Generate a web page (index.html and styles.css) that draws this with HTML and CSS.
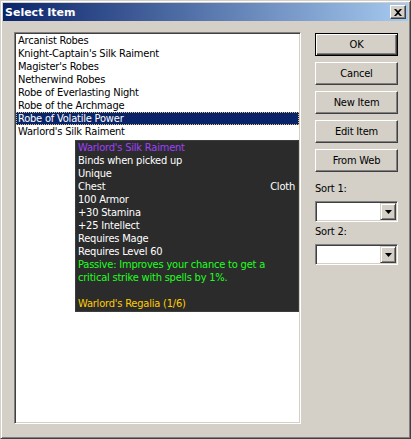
FILE: index.html
```html
<!DOCTYPE html>
<html lang="en">
<head>
    <meta charset="UTF-8">
    <title>Select Item</title>
    <link rel="stylesheet" href="styles.css">
</head>
<body>
    <div class="window">
        <div class="titlebar">
            <span class="title">Select Item</span>
            <button class="close-btn">
                <svg width="8" height="7" viewBox="0 0 8 7"><path d="M0 0h2l2 2 2-2h2L5 3.5 8 7H6L4 5 2 7H0l3-3.5z" fill="#000"/></svg>
            </button>
        </div>
        <div class="client">
            <div class="listbox">
                <ul class="items">
                    <li>Arcanist Robes</li>
                    <li>Knight-Captain's Silk Raiment</li>
                    <li>Magister's Robes</li>
                    <li>Netherwind Robes</li>
                    <li>Robe of Everlasting Night</li>
                    <li>Robe of the Archmage</li>
                    <li class="selected">Robe of Volatile Power</li>
                    <li>Warlord's Silk Raiment</li>
                </ul>
                <div class="tooltip">
                    <div class="tip-line epic">Warlord's Silk Raiment</div>
                    <div class="tip-line">Binds when picked up</div>
                    <div class="tip-line">Unique</div>
                    <div class="tip-line split"><span>Chest</span><span>Cloth</span></div>
                    <div class="tip-line">100 Armor</div>
                    <div class="tip-line">+30 Stamina</div>
                    <div class="tip-line">+25 Intellect</div>
                    <div class="tip-line">Requires Mage</div>
                    <div class="tip-line">Requires Level 60</div>
                    <div class="tip-line green">Passive: Improves your chance to get a</div>
                    <div class="tip-line green">critical strike with spells by 1%.</div>
                    <div class="tip-line">&nbsp;</div>
                    <div class="tip-line gold">Warlord's Regalia (1/6)</div>
                </div>
            </div>
            <div class="side">
                <button class="btn default">OK</button>
                <button class="btn">Cancel</button>
                <button class="btn">New Item</button>
                <button class="btn">Edit Item</button>
                <button class="btn">From Web</button>

                <div class="field-label first">Sort 1:</div>
                <div class="combo">
                    <div class="combo-text"></div>
                    <div class="combo-btn">
                        <svg width="7" height="4" viewBox="0 0 7 4"><path d="M0 0h7L3.5 4z" fill="#000"/></svg>
                    </div>
                </div>

                <div class="field-label">Sort 2:</div>
                <div class="combo">
                    <div class="combo-text"></div>
                    <div class="combo-btn">
                        <svg width="7" height="4" viewBox="0 0 7 4"><path d="M0 0h7L3.5 4z" fill="#000"/></svg>
                    </div>
                </div>
            </div>
        </div>
    </div>
</body>
</html>
```

FILE: styles.css
```css
body {
    margin: 0;
    background-color: #d4d0c8;
    font-family: "DejaVu Sans Condensed", "Liberation Sans", Arial, sans-serif;
    font-size: 11px;
    letter-spacing: -0.2px;
}
.window {
    box-sizing: border-box;
    width: 411px;
    height: 439px;
    border: 1px solid;
    border-color: #d4d0c8 #404040 #404040 #d4d0c8;
    box-shadow: inset 1px 1px #fff, inset -1px -1px #808080;
    padding: 2px;
    background-color: #d4d0c8;
}
.titlebar {
    height: 18px;
    display: flex;
    align-items: center;
    justify-content: space-between;
    background: linear-gradient(to right, #0a246a, #a6caf0);
    padding: 0 2px 0 2px;
}
.title {
    color: #fff;
    font-family: "DejaVu Sans", sans-serif;
    font-weight: bold;
    font-size: 11px;
    letter-spacing: 0;
}
.close-btn {
    box-sizing: border-box;
    width: 16px;
    height: 14px;
    padding: 0;
    background-color: #d4d0c8;
    border: 1px solid;
    border-color: #fff #404040 #404040 #fff;
    box-shadow: inset -1px -1px #808080;
    display: flex;
    align-items: center;
    justify-content: center;
}
.client {
    display: flex;
    padding: 11px 0 0 11px;
}
.listbox {
    position: relative;
    box-sizing: border-box;
    width: 287px;
    height: 392px;
    background-color: #fff;
    border: 1px solid;
    border-color: #808080 #fff #fff #808080;
    box-shadow: inset 1px 1px #404040, inset -1px -1px #d4d0c8;
    padding: 1px;
}
.items {
    list-style: none;
    margin: 0;
    padding: 0;
}
.items li {
    height: 13px;
    line-height: 13px;
    padding-left: 2px;
    white-space: nowrap;
}
.items li.selected {
    background-color: #0a246a;
    color: #fff;
    outline: 1px dotted #e0c070;
    outline-offset: -1px;
}
.tooltip {
    position: absolute;
    left: 60px;
    top: 107px;
    box-sizing: border-box;
    width: 224px;
    height: 172px;
    padding: 0 3px 0 2px;
    background-color: #2b2b2b;
    border: 1px solid #3c3c3c;
    color: #fff;
}
.tip-line {
    height: 13px;
    line-height: 13px;
    white-space: nowrap;
}
.tip-line.split {
    display: flex;
    justify-content: space-between;
}
.epic {
    color: #a040ff;
}
.green {
    color: #20ff20;
}
.gold {
    color: #ffcc00;
}
.side {
    display: flex;
    flex-direction: column;
    width: 83px;
    margin-left: 14px;
    padding-top: 1px;
}
.btn {
    box-sizing: border-box;
    width: 83px;
    height: 23px;
    margin-bottom: 6px;
    padding: 0;
    font-family: inherit;
    font-size: 11px;
    letter-spacing: inherit;
    color: #000;
    background-color: #d4d0c8;
    border: 1px solid;
    border-color: #fff #404040 #404040 #fff;
    box-shadow: inset -1px -1px #808080;
}
.btn.default {
    border-color: #000;
    box-shadow: inset 1px 1px #fff, inset -1px -1px #404040, inset -2px -2px #808080;
}
.field-label {
    height: 13px;
    line-height: 13px;
    margin-top: 3px;
    margin-bottom: 6px;
}
.field-label.first {
    margin-top: 4px;
}
.combo {
    box-sizing: border-box;
    height: 21px;
    display: flex;
    justify-content: flex-end;
    background-color: #fff;
    border: 1px solid;
    border-color: #808080 #fff #fff #808080;
    box-shadow: inset 1px 1px #404040, inset -1px -1px #d4d0c8;
    padding: 1px;
}
.combo-text {
    flex: 1;
}
.combo-btn {
    box-sizing: border-box;
    width: 16px;
    height: 17px;
    background-color: #d4d0c8;
    border: 1px solid;
    border-color: #d4d0c8 #404040 #404040 #d4d0c8;
    box-shadow: inset 1px 1px #fff, inset -1px -1px #808080;
    display: flex;
    align-items: center;
    justify-content: center;
}
```
